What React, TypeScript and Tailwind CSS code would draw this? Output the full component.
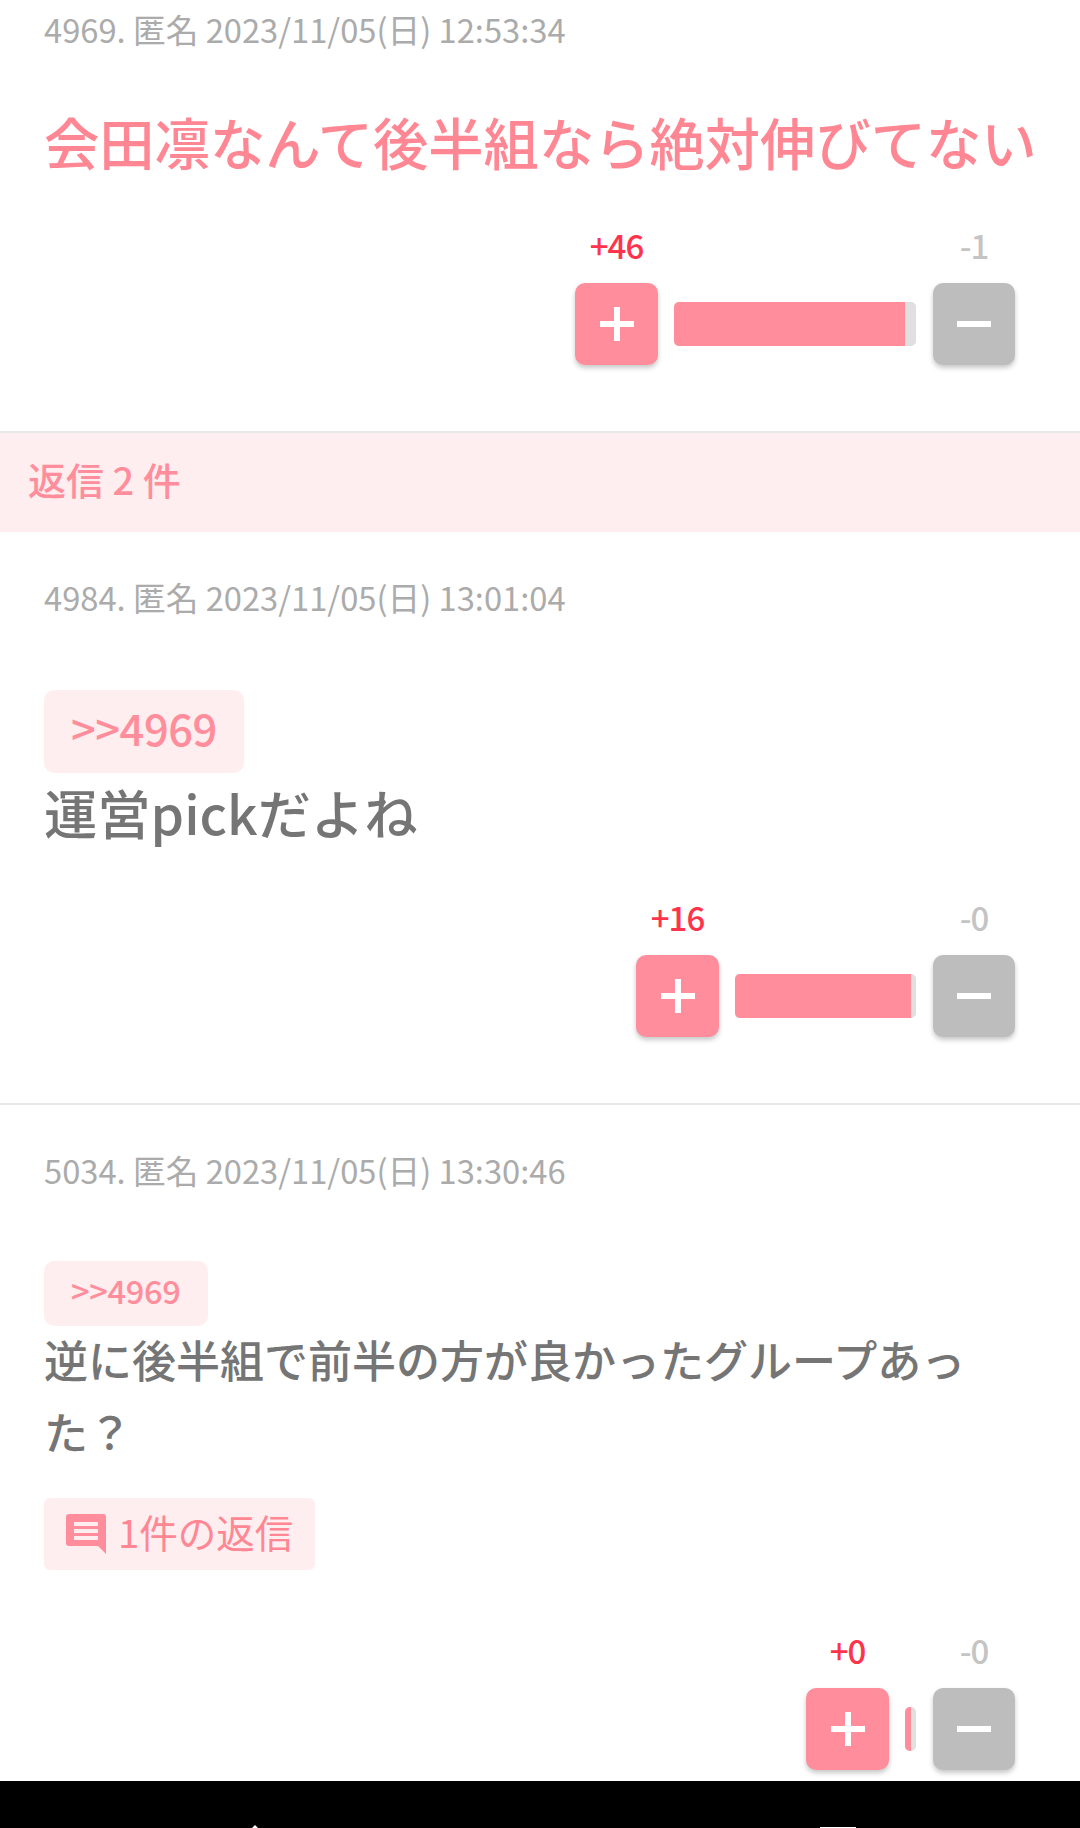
const font = "[font-family:'Noto_Sans_CJK_JP','Noto_Sans',sans-serif]";

function Vote({ plus, minus, barW, fillW }: { plus: string; minus: string; barW: string; fillW: string }) {
  return (
    <div className="flex justify-end pr-[65px]">
      <div className="flex flex-col items-center">
        <div className="h-[48px] text-[33px] leading-[48px] font-medium tracking-[-1px] text-[#ff334b]">{plus}</div>
        <div className="mt-[14px] flex h-[82px] w-[83px] items-center justify-center rounded-[10px] bg-[#ff8d9b] shadow-[0_3px_5px_rgba(0,0,0,0.22)]">
          <svg width="34" height="34" viewBox="0 0 34 34"><path d="M14 0h6v14h14v6H20v14h-6V20H0v-6h14z" fill="#fff" /></svg>
        </div>
      </div>
      <div className={`mt-[81px] mr-[17px] ml-[16px] h-[44px] overflow-hidden rounded-[5px] bg-[#e0e0e0] ${barW}`}>
        <div className={`h-full bg-[#ff8d9b] ${fillW}`} />
      </div>
      <div className="flex flex-col items-center">
        <div className="h-[48px] text-[33px] leading-[48px] font-medium tracking-[-1px] text-[#c4c4c4]">{minus}</div>
        <div className="mt-[14px] flex h-[82px] w-[82px] items-center justify-center rounded-[10px] bg-[#bdbdbd] shadow-[0_3px_5px_rgba(0,0,0,0.22)]">
          <svg width="34" height="34" viewBox="0 0 34 34"><path d="M0 14h34v6H0z" fill="#fff" /></svg>
        </div>
      </div>
    </div>
  );
}

function Meta({ children, className }: { children: string; className: string }) {
  return <div className={`pl-[44px] text-[32.7px] leading-[44px] text-[#ababab] ${className}`}>{children}</div>;
}

export default function App() {
  return (
    <div className={`relative h-[1828px] w-[1080px] overflow-hidden bg-white ${font}`}>
      <Meta className="pt-[7px]">4969. 匿名 2023/11/05(日) 12:53:34</Meta>
      <div className="mt-[54px] pl-[44px] text-[55.3px] leading-[72px] font-medium whitespace-nowrap text-[#ff8794]">会田凛なんて後半組なら絶対伸びてない</div>
      <div className="mt-[44px]">
        <Vote plus="+46" minus="-1" barW="w-[242px]" fillW="w-[231px]" />
      </div>
      <div className="mt-[66px] h-[101px] border-t-2 border-[#e8e8e8] bg-[#ffeef0] pl-[28px] text-[38px] leading-[92px] font-medium text-[#ff8d9b]">返信 2 件</div>

      <Meta className="pt-[43px]">4984. 匿名 2023/11/05(日) 13:01:04</Meta>
      <div className="mt-[71px] ml-[44px] h-[83px] w-[200px] rounded-[10px] bg-[#ffeef0] pl-[27px] text-[43.5px] leading-[75px] font-medium tracking-[-0.5px] whitespace-nowrap text-[#ff8d9b]">&gt;&gt;4969</div>
      <div className="mt-[3px] pl-[44px] text-[53.3px] leading-[72px] font-medium text-[#757575]">運営pickだよね</div>
      <div className="mt-[45px]">
        <Vote plus="+16" minus="-0" barW="w-[181px]" fillW="w-[176px]" />
      </div>
      <div className="mt-[66px] border-t-2 border-[#e8e8e8]" />

      <Meta className="pt-[43px]">5034. 匿名 2023/11/05(日) 13:30:46</Meta>
      <div className="mt-[69px] ml-[44px] h-[65px] w-[164px] rounded-[10px] bg-[#ffeef0] pl-[27px] text-[32.6px] leading-[57px] font-medium tracking-[-0.3px] whitespace-nowrap text-[#ff8d9b]">&gt;&gt;4969</div>
      <div className="mt-[-3px] w-[990px] pl-[44px] text-[44px] leading-[72px] font-medium text-[#757575]">逆に後半組で前半の方が良かったグループあった？</div>
      <div className="mt-[31px] ml-[44px] flex h-[72px] w-[271px] items-center rounded-[6px] bg-[#ffeef0] pl-[22px] text-[38.5px] text-[#ff8794]">
        <svg width="40" height="40" viewBox="0 0 40 40" className="mr-[12px] shrink-0">
          <path d="M3 0h34a3 3 0 0 1 3 3v37l-8-8H3a3 3 0 0 1-3-3V3a3 3 0 0 1 3-3zM8 8v4h24V8zM8 15v4h24v-4zM8 22v4h24v-4z" fill="#ff8d9b" fillRule="evenodd" />
        </svg>
        <span className="-translate-y-[2px]">1件の返信</span>
      </div>
      <div className="mt-[56px]">
        <Vote plus="+0" minus="-0" barW="w-[11px]" fillW="w-[6px]" />
      </div>

      <div className="absolute inset-x-0 top-[1781px] h-[47px] bg-black">
        <svg width="1080" height="47" viewBox="0 0 1080 47" className="block">
          <path d="M255 44l-3 3h6z" fill="#fff" />
          <rect x="820" y="46" width="36" height="1" fill="#fff" />
        </svg>
      </div>
    </div>
  );
}
